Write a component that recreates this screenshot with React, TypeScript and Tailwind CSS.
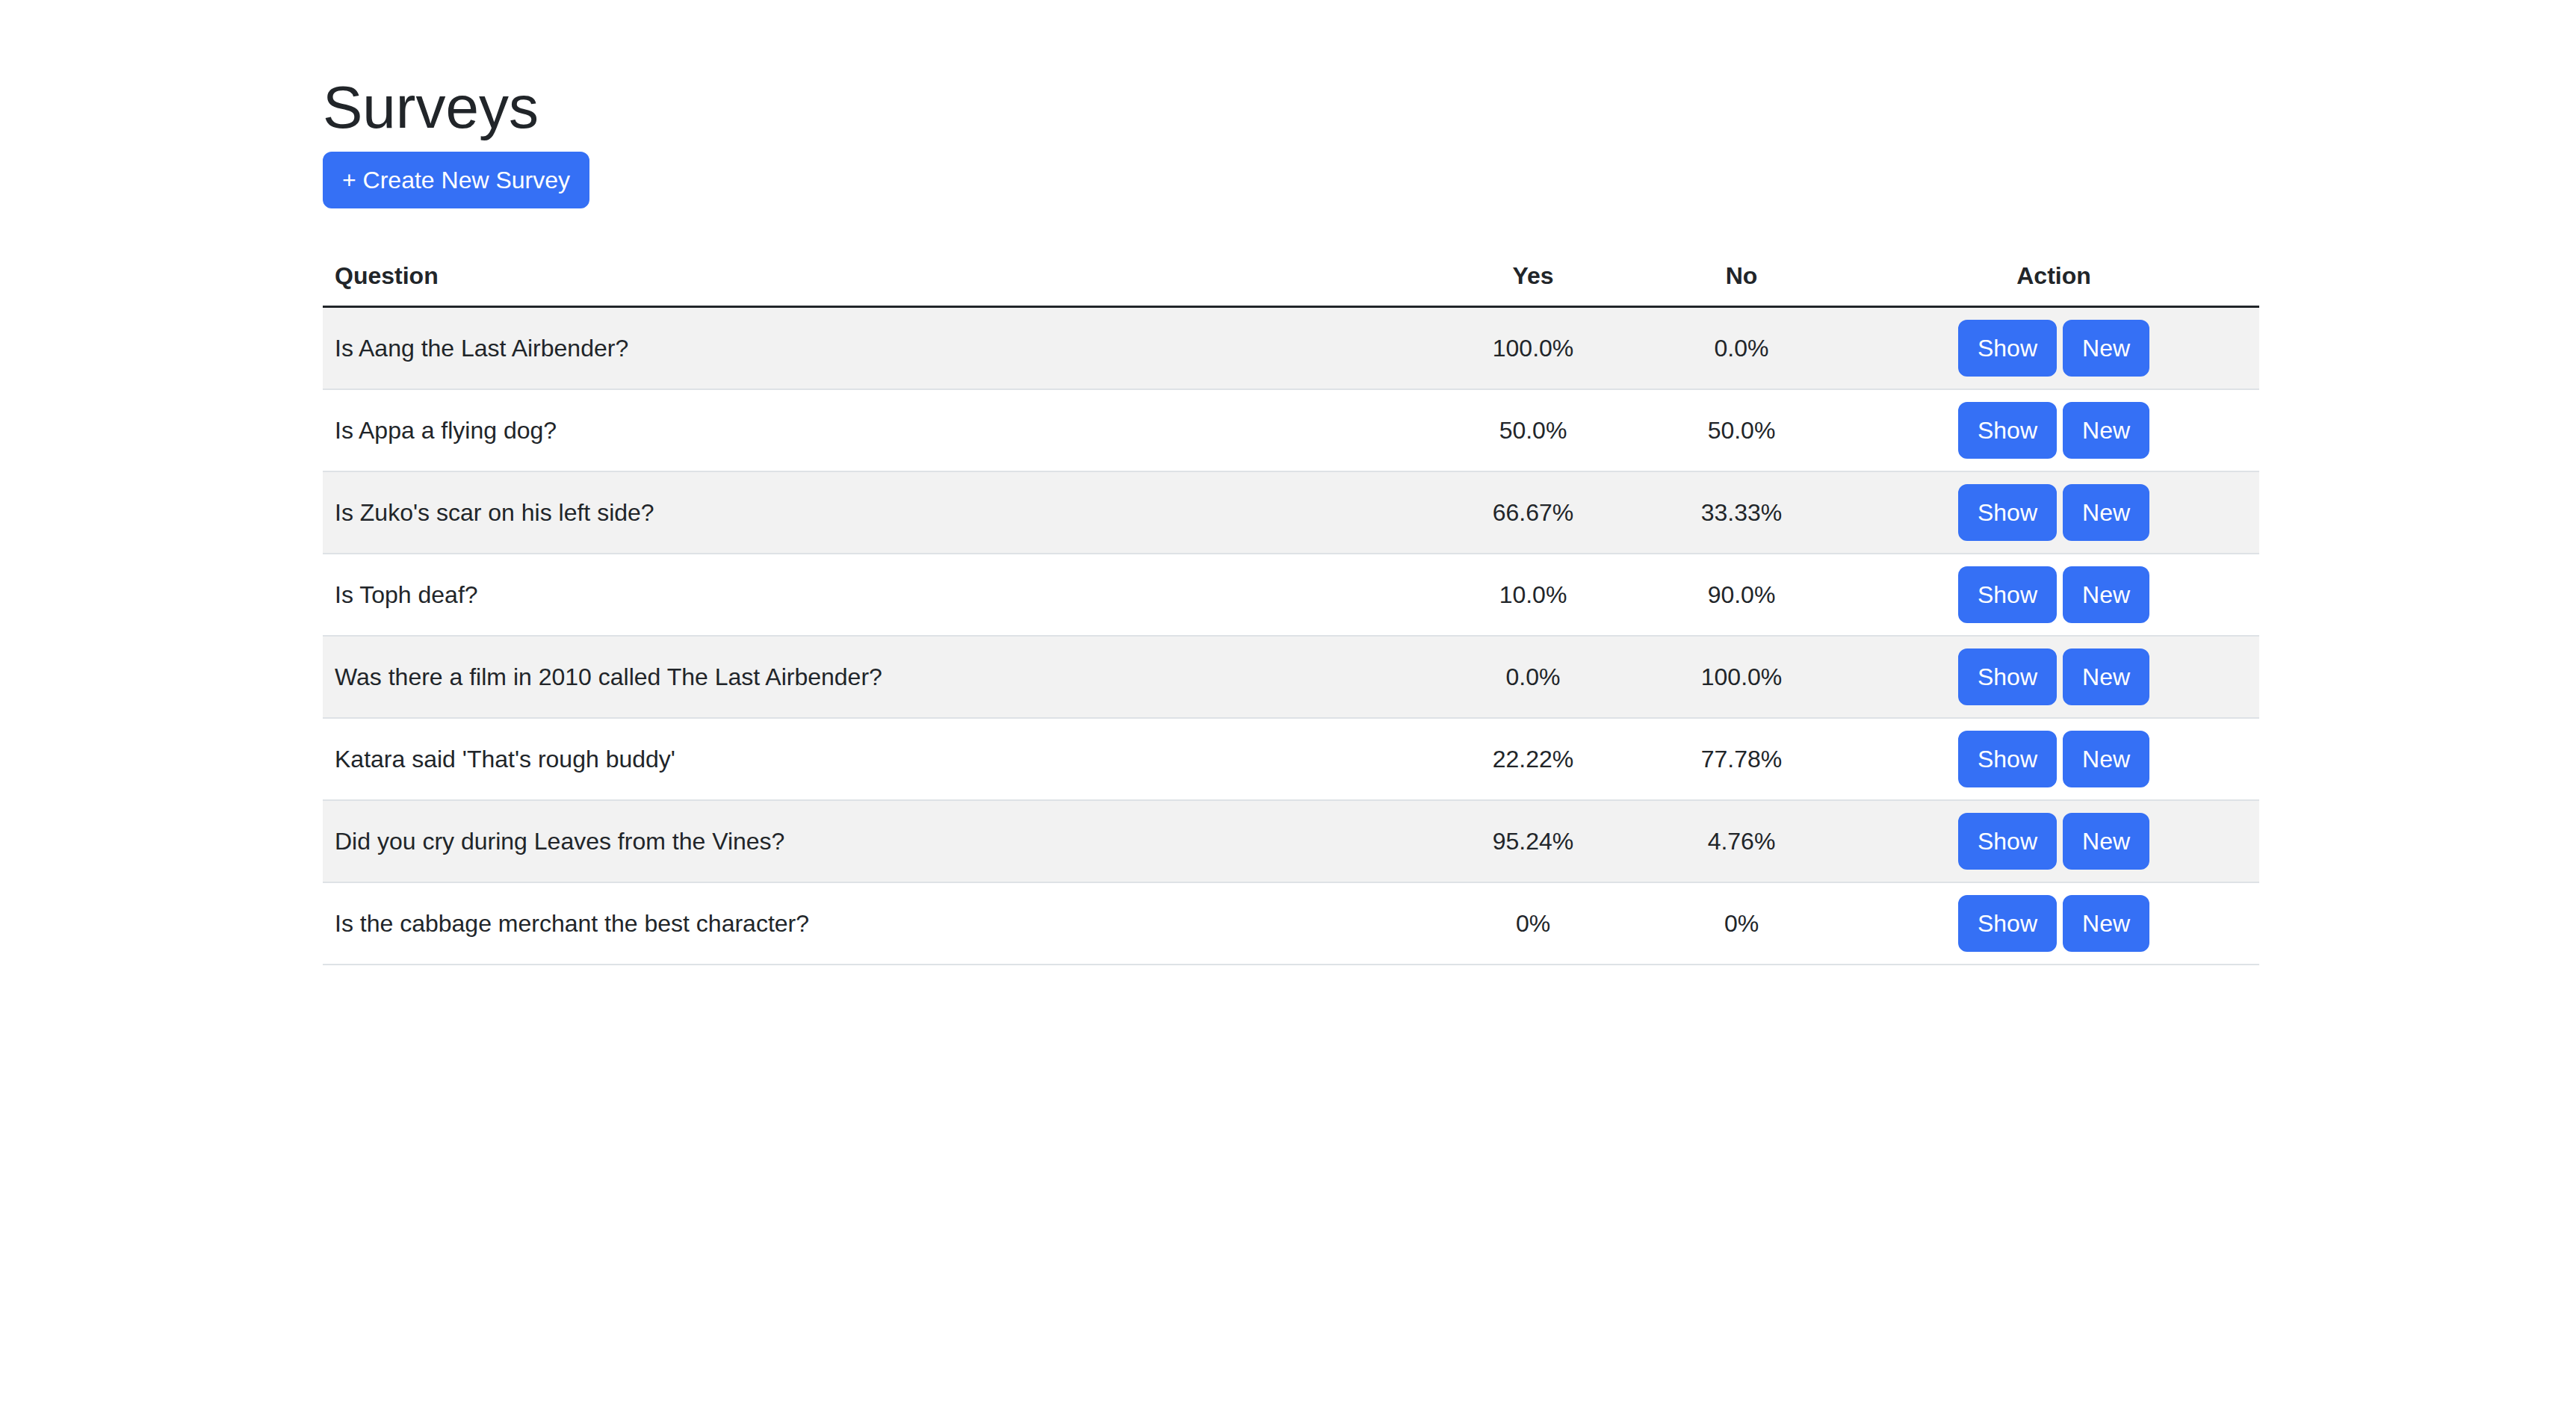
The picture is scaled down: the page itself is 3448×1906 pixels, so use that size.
const surveys = [
  { question: "Is Aang the Last Airbender?", yes: "100.0%", no: "0.0%" },
  { question: "Is Appa a flying dog?", yes: "50.0%", no: "50.0%" },
  { question: "Is Zuko's scar on his left side?", yes: "66.67%", no: "33.33%" },
  { question: "Is Toph deaf?", yes: "10.0%", no: "90.0%" },
  { question: "Was there a film in 2010 called The Last Airbender?", yes: "0.0%", no: "100.0%" },
  { question: "Katara said 'That's rough buddy'", yes: "22.22%", no: "77.78%" },
  { question: "Did you cry during Leaves from the Vines?", yes: "95.24%", no: "4.76%" },
  { question: "Is the cabbage merchant the best character?", yes: "0%", no: "0%" },
];

const btn =
  "inline-block rounded-[12px] border-2 border-[#3570f5] bg-[#3570f5] px-[24px] py-[12px] text-[32px] leading-[48px] text-white";

const App = () => (
  <div className="min-h-[1906px] bg-white font-['Liberation_Sans',Arial,sans-serif] text-[#212529]">
    <div className="mx-auto w-[2640px] pl-[28px] pr-[20px] pt-[96px]">
      <h1 className="mb-[11px] text-[80px] leading-[96px] font-medium">Surveys</h1>
      <a href="#" className={btn}>
        + Create New Survey
      </a>

      <table className="mt-[50px] w-full text-[32px] leading-[48px]">
        <colgroup>
          <col className="w-[1484px]" />
          <col className="w-[272px]" />
          <col className="w-[286px]" />
          <col className="w-[550px]" />
        </colgroup>
        <thead>
          <tr className="border-b-[3px] border-[#212529]">
            <th className="p-[16px] text-left font-bold">Question</th>
            <th className="p-[16px] text-center font-bold">Yes</th>
            <th className="p-[16px] text-center font-bold">No</th>
            <th className="p-[16px] text-center font-bold">Action</th>
          </tr>
        </thead>
        <tbody>
          {surveys.map((s) => (
            <tr key={s.question} className="border-b-2 border-[#dee2e6] odd:bg-[#f2f2f2]">
              <td className="p-[16px] align-middle">{s.question}</td>
              <td className="p-[16px] text-center align-middle">{s.yes}</td>
              <td className="p-[16px] text-center align-middle">{s.no}</td>
              <td className="p-[16px] align-middle">
                <div className="flex justify-center gap-[8px]">
                  <a href="#" className={btn}>
                    Show
                  </a>
                  <a href="#" className={btn}>
                    New
                  </a>
                </div>
              </td>
            </tr>
          ))}
        </tbody>
      </table>
    </div>
  </div>
);

export default App;
